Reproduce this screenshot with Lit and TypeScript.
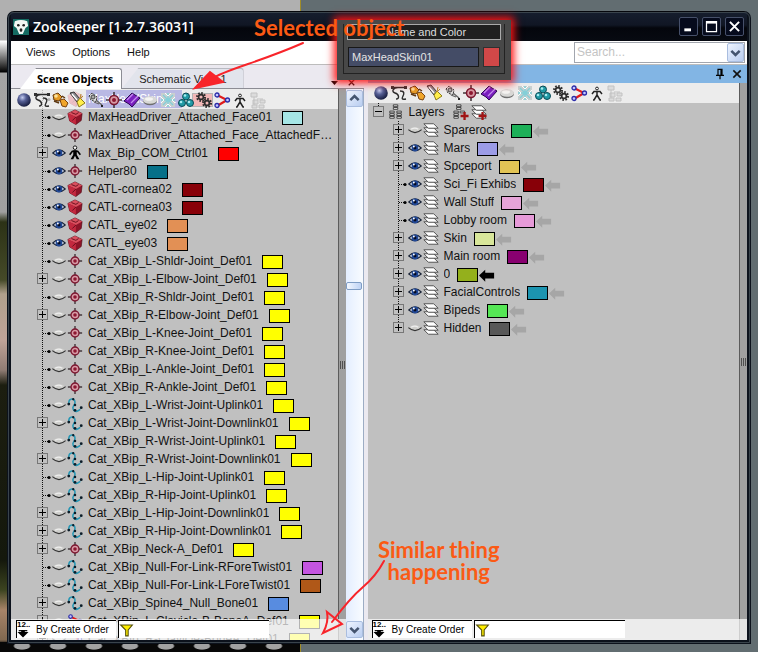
import { LitElement, html, css, svg, nothing } from "lit";
import { customElement, property } from "lit/decorators.js";
import { styleMap } from "lit/directives/style-map.js";

const glyphs: Record<string, unknown> = {
  sphere: svg`<defs><radialGradient id="s" cx=".38" cy=".32" r=".7"><stop offset="0" stop-color="#c4cdf0"/><stop offset=".4" stop-color="#566096"/><stop offset="1" stop-color="#141a3c"/></radialGradient></defs><circle cx="9" cy="9" r="6.8" fill="url(#s)"/>`,
  spline: svg`<path d="M2 3.500h13M9 3.500C3 3 1 8 5 9s5 6 1 6M10 7c5 0 4 3 3 5s-2 4 3 3" fill="none" stroke="#2a2a2a" stroke-width="1.400"/><path d="M1 2h3v3H1zM14 2h3v3h-3z" fill="#333"/>`,
  lights: svg`<path d="M2 4l5-2 4 4-3 4-5-1z" fill="#e39a25" stroke="#6a3b0c"/><path d="M9 9l4-1 4 4-2 4-4-1z" fill="#f0a52a" stroke="#7a420e"/><circle cx="5" cy="5" r="1.800" fill="#fbe29a"/><path d="M3 10l5 2M11 5l3 2" stroke="#5b3610" stroke-width="1.500"/>`,
  torch: svg`<path d="M1 2l4-1 6 7-3 3z" fill="#8c8c92" stroke="#333"/><path d="M3 3l5 6" stroke="#fff" stroke-width="1.300"/><path d="M11 7l5 5-6 4-2-5z" fill="#ffee4a" stroke="#8d7b1a"/><path d="M12 3l-1 5M14 5l-3 3" stroke="#b7882d"/>`,
  tape: svg`<path d="M2 5l3-3 5 4-1 5-5-2z" fill="#ddd" stroke="#333" stroke-dasharray="2 1"/><circle cx="6" cy="6" r="2" fill="#aaa" stroke="#444"/><path d="M9 9l6 5M7 11l5 2" stroke="#666" stroke-width="1.300"/><path d="M14 14h2v2h-2z" fill="#222"/>`,
  helper: svg`<path d="M9 1v16M1 9h16" stroke="#44383c" stroke-width="1.600"/><circle cx="9" cy="9" r="4.500" fill="#d79aa5" stroke="#7c1730" stroke-width="1.500"/><circle cx="9" cy="9" r="2" fill="#8c1731"/>`,
  warp: svg`<path d="M1 10l8-8 3 2 5 3-8 9-3-3z" fill="#7a1fc0" stroke="#2c0652"/><path d="M4 9l6-6M8 12l7-7" stroke="#c48af0" stroke-width="1.300"/>`,
  lid: svg`<ellipse cx="9" cy="10" rx="7" ry="4.200" fill="#6e6e6e"/><ellipse cx="9" cy="9" rx="7" ry="3.800" fill="#d8d8d6"/><ellipse cx="8" cy="8" rx="4" ry="1.800" fill="#f4f4f2"/>`,
  snow: svg`<path d="M2 2h14v14H2z" fill="#c9cfcf"/><path d="M9 2v14M2 9h14M4 4l10 10M14 4L4 14" stroke="#83cfd8" stroke-width="1.400"/><path d="M6 2l3 3 3-3M6 16l3-3 3 3M2 6l3 3-3 3M16 6l-3 3 3 3" fill="none" stroke="#f6ffff"/>`,
  balls: svg`<g fill="#219aa5" stroke="#0b4a55"><circle cx="9" cy="5.500" r="3.500"/><circle cx="5" cy="12" r="3.500"/><circle cx="13" cy="12" r="3.500"/></g><g fill="#a5ecf0"><circle cx="8" cy="4.500" r="1.300"/><circle cx="4" cy="11" r="1.300"/><circle cx="12" cy="11" r="1.300"/></g>`,
  gears: svg`<g fill="none" stroke="#2c2c2c"><circle cx="6" cy="6" r="4" stroke-width="2" stroke-dasharray="1.600 1.500"/><circle cx="6" cy="6" r="2.400" stroke-width="1.600"/><circle cx="12" cy="12" r="4" stroke-width="2" stroke-dasharray="1.600 1.500"/><circle cx="12" cy="12" r="2.400" stroke-width="1.800"/></g>`,
  bones: svg`<path d="M4 4l10 5-10 6" fill="none" stroke="#e01b1b" stroke-width="2.200"/><g fill="#c3c6ff" stroke="#2a2aa8" stroke-width="1.300"><circle cx="4" cy="4" r="2"/><circle cx="14.500" cy="9" r="2"/><circle cx="4" cy="14.500" r="2"/></g>`,
  biped: svg`<circle cx="9" cy="4.500" r="1.400" fill="#fff" stroke="#222"/><path d="M4 10l2-2.500h6l2 2.500M9 7v4M9 11l-3 5H5M9 11l3 5h1" fill="none" stroke="#222" stroke-width="1.500"/>`,
  walker: svg`<circle cx="9" cy="3" r="2" fill="#fff" stroke="#000"/><path d="M3 11l3-4h6l3 4" fill="none" stroke="#000" stroke-width="1.800"/><path d="M7 6h4v5l3 5h-3l-2-4-2 4H4l3-5z"/>`,
  tree: svg`<g fill="#dcdcdc" stroke="#c2c2c2"><path d="M2 2h6v4H2zM4 9h5v4H4zM11 9h5v3h-5zM3 14h5v3H3zM10 14h5v3h-5zM5 6v8M8 8h6"/></g>`,
  mesh: svg`<path d="M1 5l8-4 8 4-1 8-6 4.500-7-4z" fill="#8e1428" stroke="#4c0814" stroke-width=".7"/><path d="M1 5l8-4 8 4-7 4z" fill="#d9505f"/><path d="M1 5l9 4v8.500l-7-4z" fill="#c3293f"/><path d="M5 4l5 2 3-2M10 9l-4 4" fill="none" stroke="#5b0b18"/>`,
  cat: svg`<path d="M2 7c0-6 7-6 7-1s-4 4-2 8 5 2 8 0" fill="none" stroke="#2396b4" stroke-width="1.700"/><g fill="#0b1c28"><circle cx="2" cy="8" r="1.600"/><circle cx="7" cy="2.500" r="1.300"/><circle cx="9" cy="9" r="1.400"/><circle cx="9" cy="15" r="1.600"/><circle cx="16" cy="12" r="1.600"/></g>`,
  layers: svg`<g fill="#fff" stroke="#444"><path d="M1 11h11l5 5H6z"/><path d="M1 6.500h11l5 5H6z"/><path d="M1 2h11l5 5H6z"/></g>`,
  stack: svg`<g fill="#eee" stroke="#333"><path d="M6 1h5v2H6zM6 4h5v2H6zM2 8h5v2H2zM2 11h5v2H2zM2 14h5v2H2zM10 8h5v2h-5zM10 11h5v2h-5zM10 14h5v2h-5z"/></g>`,
  addStack: svg`<g fill="#eee" stroke="#333"><path d="M4 1h5v2H4zM4 4h5v2H4zM1 8h5v2H1zM1 11h5v2H1zM1 14h5v2H1zM8 8h5v2H8z"/></g><path d="M13 9v9M8.500 13.500h9" stroke="#a01414" stroke-width="2.600"/>`,
  addLayer: svg`<g fill="#fff" stroke="#444"><path d="M1 11h11l5 5H6z"/><path d="M1 6.500h11l5 5H6z"/><path d="M1 2h11l5 5H6z"/></g><path d="M13 9v9M8.500 13.500h9" stroke="#a01414" stroke-width="2.600"/>`,
  open: svg`<path d="M1 9Q9 1 17 9Q9 16 1 9z" fill="#f2f5fa" stroke="#1a2438" stroke-width="1.500"/><circle cx="9" cy="9" r="4.400" fill="#214896"/><circle cx="9" cy="9" r="1.900" fill="#040a20"/><circle cx="7.500" cy="7" r="1.200" fill="#fff"/>`,
  shut: svg`<path d="M1 8Q9 3 17 8Q9 15 1 8z" fill="#cfcfcc"/><path d="M0.500 8.500Q9 16 17.500 8.500" fill="none" stroke="#333" stroke-width="1.600"/><path d="M4 8Q9 5 13 8" fill="none" stroke="#eee" stroke-width="1.500"/>`,
  arrow: svg`<path d="M0 9.500L7 3v3.500h10v6.500H7v3.500z" fill="currentColor"/>`,
  funnel: svg`<path d="M2 3h14l-5 6v7H8V9z" fill="#ffee00" stroke="#55500a" stroke-width="1.300"/>`,
  down: svg`<path d="M4 7l5 5 5-5" fill="none" stroke="#44546f" stroke-width="3"/>`,
  up: svg`<path d="M4 11l5-5 5 5" fill="none" stroke="#44546f" stroke-width="3"/>`,
  close: svg`<path d="M3.500 3.500l11 11M14.500 3.500l-11 11" stroke="currentColor" stroke-width="2.400"/>`,
  maximise: svg`<path d="M3 3h12v12H3z" fill="none" stroke="#fff" stroke-width="1.500"/><path d="M3 4h12" stroke="#fff" stroke-width="3"/>`,
  minimise: svg`<path d="M4 13h8" stroke="#fff" stroke-width="3.500"/>`,
  pin: svg`<path d="M6 2h6v9H6zM10.500 2v9M3 11h12M9 11v6" fill="none" stroke="#000" stroke-width="1.800"/>`,
  caret: svg`<path d="M2 6h14l-7 8z"/>`,
  sort: svg`<path d="M6 5h6v3h6l-9 9-9-9h6z"/><path d="M2 6h14" stroke="#000" stroke-width="2"/>`,
  logo: svg`<path d="M0 0h18v18H0z" fill="#146b62"/><path d="M2 2.500Q9 0 16 2.500L17 8 14 10 11 17H7L4 10 1 8z" fill="#f3f8f4"/><g fill="#222"><circle cx="6" cy="7" r="1.500"/><circle cx="12" cy="7" r="1.500"/><ellipse cx="9" cy="12.500" rx="1.600" ry="2"/></g>`,
  blank: svg`<path d="M5 9l4-4 4 4v2H5z"/>`,
};

@customElement("zk-icon")
class ZkIcon extends LitElement {
  @property() name = "blank";
  static styles = css`
    :host { display: block; flex: none; width: 18px; height: 18px; }
    .glyph { display: block; width: 100%; height: 100%; }
  `;
  render() {
    return html`<svg class="glyph" viewBox="0 0 18 18" aria-hidden="true">${glyphs[this.name]}</svg>`;
  }
}

type Node = { label: string; icon: string; color: string; open?: boolean; parent?: boolean; selected?: boolean; current?: boolean };

const n = (label: string, icon: string, color: string, flags = ""): Node => ({
  label, icon, color,
  parent: flags.includes("+"),
  open: flags.includes("o"),
  selected: flags.includes("s"),
  current: flags.includes("c"),
});

const Y = "#ffff00";
const sceneNodes: Node[] = [
  n("MaxHeadSkin01", "mesh", "#d01010", "s"),
  n("MaxHeadDriver_Attached_Face01", "mesh", "#a6e6e6"),
  n("MaxHeadDriver_Attached_Face_AttachedFace02", "helper", ""),
  n("Max_Bip_COM_Ctrl01", "walker", "#ff0000", "+o"),
  n("Helper80", "helper", "#067088", "o"),
  n("CATL-cornea02", "mesh", "#880008", "o"),
  n("CATL-cornea03", "mesh", "#880008", "o"),
  n("CATL_eye02", "mesh", "#e29055", "o"),
  n("CATL_eye03", "mesh", "#e29055", "o"),
  n("Cat_XBip_L-Shldr-Joint_Def01", "helper", Y),
  n("Cat_XBip_L-Elbow-Joint_Def01", "helper", Y, "+"),
  n("Cat_XBip_R-Shldr-Joint_Def01", "helper", Y),
  n("Cat_XBip_R-Elbow-Joint_Def01", "helper", Y, "+"),
  n("Cat_XBip_L-Knee-Joint_Def01", "helper", Y),
  n("Cat_XBip_R-Knee-Joint_Def01", "helper", Y),
  n("Cat_XBip_L-Ankle-Joint_Def01", "helper", Y),
  n("Cat_XBip_R-Ankle-Joint_Def01", "helper", Y),
  n("Cat_XBip_L-Wrist-Joint-Uplink01", "cat", Y),
  n("Cat_XBip_L-Wrist-Joint-Downlink01", "cat", Y, "+"),
  n("Cat_XBip_R-Wrist-Joint-Uplink01", "cat", Y),
  n("Cat_XBip_R-Wrist-Joint-Downlink01", "cat", Y, "+"),
  n("Cat_XBip_L-Hip-Joint-Uplink01", "cat", Y),
  n("Cat_XBip_R-Hip-Joint-Uplink01", "cat", Y),
  n("Cat_XBip_L-Hip-Joint-Downlink01", "cat", Y, "+"),
  n("Cat_XBip_R-Hip-Joint-Downlink01", "cat", Y, "+"),
  n("Cat_XBip_Neck-A_Def01", "helper", Y, "+"),
  n("Cat_XBip_Null-For-Link-RForeTwist01", "cat", "#c455e0"),
  n("Cat_XBip_Null-For-Link-LForeTwist01", "cat", "#b05818"),
  n("Cat_XBip_Spine4_Null_Bone01", "cat", "#588ce0", "+"),
  n("Cat_XBip_L-Clavicle-B-BoneA_Def01", "bones", Y, "+"),
  n("Cat_XBip_R-Clavicle-BoneA_Def01", "bones", Y, "+"),
];

const layerNodes: Node[] = [
  n("Sparerocks", "layers", "#1cb058", "+"),
  n("Mars", "layers", "#9c9ce6", "+o"),
  n("Spceport", "layers", "#e2c455", "+o"),
  n("Sci_Fi Exhibs", "layers", "#880008", "o"),
  n("Wall Stuff", "layers", "#e6a4d8", "o"),
  n("Lobby room", "layers", "#e69ad8", "o"),
  n("Skin", "layers", "#d8e69a", "+o"),
  n("Main room", "layers", "#880070", "+o"),
  n("0", "layers", "#94b01c", "+oc"),
  n("FacialControls", "layers", "#1c94b0", "+o"),
  n("Bipeds", "layers", "#55e655", "+o"),
  n("Hidden", "layers", "#585858", "+"),
];

const tools: [string, string][] = [
  ["sphere", "Geometry"], ["spline", "Shapes"], ["lights", "Lights"], ["torch", "Cameras"], ["tape", "Tape"],
  ["helper", "Helpers"], ["warp", "Space warps"], ["lid", "Hidden"], ["snow", "Frozen"], ["balls", "Groups"],
  ["gears", "Systems"], ["bones", "Bones"], ["biped", "Bipeds"], ["tree", "Hierarchy"],
];

@customElement("app-root")
class AppRoot extends LitElement {
  static styles = css`
    :host {
      display: block; position: relative; box-sizing: border-box; height: 100vh; min-height: 400px;
      padding: 11px 7px 8px; overflow: hidden; background: #626d71; color: #111;
      font: 12px/18px "Liberation Sans", Arial, sans-serif;
    }
    * { box-sizing: border-box; }
    button, input { font: inherit; color: inherit; margin: 0; padding: 0; border: 0; background: none; min-width: 0; }
    button { display: block; flex: none; }

    .backdrop { position: absolute; inset: 0 auto 0 0; width: 301px; border-right: 1px solid #a08c28; display: flex; flex-direction: column;
      background: linear-gradient(#b0b0b0 40px, #fff 41px, #000 72px, #a4a4a4 73px, #a0a0a0 212px, #2c3216 222px, #454a28 280px, #b0a08c 294px, #c0a398 340px, #907c74 370px, #1c1e10 385px, #14180c 560px, #3c4420 590px, #a88468 610px, #806850 640px, #080808 644px); }
    .spots { margin-top: auto; height: 10px; background: #080808 radial-gradient(ellipse 9px 4px at 22px 4px, #a2a2a2 80%, transparent 100%) 0 0 / 36px 10px repeat-x; }

    .window { position: relative; height: 100%; display: flex; flex-direction: column; border: 4px solid #0c121c; border-top: 1px solid #05070c; border-radius: 7px 7px 0 0; background: #ebe9f0; outline: 1px solid #3a444c; outline-offset: -2px; }
    .title { flex: none; height: 29px; padding: 0 3px 0 2px; display: flex; align-items: center; gap: 4px; background: linear-gradient(#161e2e, #101624 45%, #04060c 55%, #070a12); }
    .title h1 { margin: 0 auto 0 0; font: 600 14px/20px "Open Sans", sans-serif; color: #fff; white-space: nowrap; }
    .logo { width: 16px; height: 16px; }
    .caption { width: 19px; height: 19px; padding: 1px; border: 1px solid #46506a; border-radius: 2px; color: #fff; background: #050a1c; }
    .caption zk-icon { width: 15px; height: 15px; }

    .menu { flex: none; height: 24px; display: flex; align-items: center; padding: 0 2px 1px 15px; gap: 17px; background: #fff; border-bottom: 1px solid #bcbcbc; font-size: 11px; }
    .search { margin-left: auto; width: 171px; height: 21px; display: flex; border: 1px solid #a2a6ae; background: #fff; font-size: 12px; }
    .search input { flex: 1; padding-left: 2px; }
    .search input::placeholder { color: #c4c4c4; opacity: 1; }
    .scroll-btn { width: 17px; height: 17px; border: 1px solid #a9bddf; border-radius: 2px; background: linear-gradient(135deg, #eef4ff, #b9cdf0); }
    .scroll-btn zk-icon { width: 15px; height: 15px; }
    .search .scroll-btn { height: 19px; padding-top: 1px; }

    .panes { flex: 1; min-height: 0; display: grid; grid-template-columns: minmax(0, 353fr) minmax(0, 380fr); grid-template-rows: minmax(0, 1fr); column-gap: 4px; }
    .pane { display: flex; flex-direction: column; min-height: 0; }
    .tabs { flex: none; height: 24px; display: flex; align-items: flex-end; padding: 0 8px 0 9px; border-bottom: 1px solid #8c8c94; font-size: 11px; }
    .tab { height: 20px; padding: 0 16px 0 17px; border: 1px solid #b8bac2; border-bottom: 0; border-left: 0; border-radius: 8px 3px 0 0; color: #222; background: #e2e4ec; clip-path: polygon(0 100%, 16px 0, 100% 0, 100% 100%); white-space: nowrap; }
    .tab.on { height: 21px; padding: 0 8px 0 17px; margin-bottom: -1px; background: #fff; border-color: #8c8c94; font: 700 11px/18px "Open Sans", sans-serif; color: #000; }
    .tab-tools { margin-left: auto; display: flex; gap: 8px; padding-bottom: 1px; }
    .tab-tools zk-icon { width: 9px; height: 9px; }
    .head { flex: none; height: 18px; display: flex; justify-content: flex-end; align-items: center; gap: 5px; padding-right: 4px; background: #82b5e4; }
    .head zk-icon { width: 12px; height: 12px; }

    .body { flex: 1; min-height: 0; display: flex; }
    .view { position: relative; flex: 1; min-width: 0; display: flex; background: #c0c0c0; }
    .main { position: relative; flex: 1; min-width: 0; overflow: hidden; }
    .tools { height: 20px; display: flex; padding: 1px 4px; background: rgba(255, 255, 255, 0.7); }
    .scene .tools { position: absolute; inset: 0 0 auto 0; padding-top: 2px; }
    .foot { position: absolute; inset: auto 0 0 0; height: 21px; display: flex; gap: 2px; padding: 1px 0 2px 5px; background: rgba(255, 255, 255, 0.7); }
    .layers .foot { padding-left: 4px; }
    .sorter { width: 100px; display: flex; align-items: center; border: 1px solid #000; border-width: 1px 0 0 1px; background: #fff; font-size: 10px; line-height: 16px; color: #000; }
    .sort-mark { width: 19px; display: flex; flex-direction: column; align-items: flex-start; font: 700 8px/5px "Liberation Sans", sans-serif; }
    .sort-mark zk-icon { width: 12px; height: 11px; }
    .filter { width: 151px; display: flex; align-items: center; border: 1px solid #000; border-width: 1px 0 0 1px; background: #fff; }
    .filter zk-icon { width: 15px; height: 16px; }
    .filter input { flex: 1; height: 16px; }
    .rail { flex: none; width: 8px; display: flex; align-items: center; padding-left: 1px; border-left: 1px solid #5c5c5c; background: #a0a0a0; }
    .grip { width: 6px; height: 8px; background: repeating-linear-gradient(90deg, #505050 0 1px, transparent 1px 2px); }
    .scroll { flex: none; width: 18px; display: flex; flex-direction: column; padding: 1px 0 2px; background: linear-gradient(90deg, #e4eeff, #f8fbff); border-right: 1px solid #9cacc4; }
    .track { flex: 1; display: grid; grid-template-rows: 175fr 8px 331fr; }
    .thumb { grid-row: 2; margin-right: 1px; border: 1px solid #7e9cc4; border-radius: 2px; background: linear-gradient(90deg, #f2f7ff, #bed2f4); }

    ul { list-style: none; margin: 0; padding: 1px 0 0 26px; }
    .layers ul { padding: 0 0 0 5px; }
    .layers ul ul { padding-left: 20px; }
    .row { height: 18px; display: flex; align-items: center; white-space: nowrap; }
    .twig { width: 15px; height: 18px; flex: none; }
    .twig svg { display: block; }
    .eye { width: 14px; height: 14px; }
    .eye zk-icon { width: 14px; height: 14px; }
    .kind { width: 16px; height: 16px; margin: 0 5px 0 1px; }
    .name { overflow: hidden; text-overflow: ellipsis; }
    .selected .name { margin-left: -2px; padding: 0 6px 0 2px; background: #1414a4; color: #fff; }
    .swatch { flex: none; width: 21px; height: 14px; margin: 2px 1px 0 10px; border: 1px solid #000; }
    .layers .swatch { margin-left: 7px; }
    .mark { width: 16px; height: 16px; margin-top: 1px; color: #a6a6a6; }
    .mark.current { color: #000; }
    .root .kind { margin: 0 5px 0 0; }
    .root .name { margin-right: 8px; }
    .root .add { width: 16px; height: 16px; margin-right: 2px; }
    .root .add zk-icon { width: 16px; height: 16px; }

    .card { position: absolute; left: 337px; top: 20px; width: 174px; height: 60px; padding: 4px 6px 6px; background: #484848; box-shadow: 0 0 8px 3px #ff1414; font-size: 11px; }
    .card fieldset { width: 100%; min-width: 0; height: 50px; margin: 0; padding: 0; border: 1px solid #222; border-top: 0; display: flex; flex-direction: column; gap: 7px; }
    .card h2 { margin: 0 3px; height: 16px; border: 1px solid #aaa; background: #202020; color: #ddd; font: 400 11px/14px "Liberation Sans", sans-serif; text-align: center; padding-left: 4px; }
    .fields { display: flex; gap: 4px; padding: 0 4px; }
    .fields input { flex: 1; width: 0; height: 20px; padding-left: 3px; border: 1px solid #181818; background: #444c66; color: #e4e4e4; }
    .fields button { width: 17px; height: 20px; border: 1px solid #303030; background: #d24848; }
    .note { position: absolute; margin: 0; font: 700 22px/22px Lato, sans-serif; color: #fb5a14; text-align: center; white-space: nowrap; pointer-events: none; }
    .note-a { left: 254px; top: 17px; }
    .note-b { left: 378px; top: 539px; }
    .ink { position: absolute; pointer-events: none; fill: none; stroke: #f8242a; stroke-width: 2; stroke-linecap: round; }
    .ink-a { left: 190px; top: 40px; }
    .ink-b { left: 320px; top: 558px; }
  `;

  twig(parent = false, last = false, open = false) {
    const art = svg`<path d="M5.500 0V${last ? 9 : 18}" stroke="#111" stroke-dasharray="1 1"/>
      ${parent
        ? svg`<rect x=".5" y="3.500" width="10" height="10" fill="#c0c0c0" stroke="#777"/><path d="M2 8.500h7${open ? "" : "M5.500 5v7"}" stroke="#000"/>`
        : svg`<path d="M6 9.500h7" stroke="#111" stroke-dasharray="1 1"/><circle cx="12" cy="9.500" r="1.600"/>`}`;
    const pic = html`<svg width="15" height="18" viewBox="0 0 15 18" aria-hidden="true">${art}</svg>`;
    return parent ? html`<button class="twig" aria-label="Expand">${pic}</button>` : html`<span class="twig">${pic}</span>`;
  }

  row(node: Node, last: boolean, layer: boolean) {
    return html`<li class="row ${node.selected ? "selected" : ""}">
      ${this.twig(node.parent, last)}
      <button class="eye" aria-label="Visibility of ${node.label}"><zk-icon name=${node.open ? "open" : "shut"}></zk-icon></button>
      <zk-icon class="kind" name=${node.icon}></zk-icon>
      <span class="name">${node.label}</span>
      ${node.color ? html`<button class="swatch" aria-label="Colour of ${node.label}" style=${styleMap({ background: node.color })}></button>` : nothing}
      ${layer ? html`<zk-icon class="mark ${node.current ? "current" : ""}" name="arrow"></zk-icon>` : nothing}
    </li>`;
  }

  toolbar() {
    return html`<div class="tools" role="toolbar">
      ${tools.map(([icon, label]) => html`<button aria-label=${label}><zk-icon name=${icon}></zk-icon></button>`)}
    </div>`;
  }

  footer() {
    return html`<div class="foot">
      <button class="sorter"><span class="sort-mark">12..<zk-icon name="sort"></zk-icon></span>By Create Order</button>
      <label class="filter"><zk-icon name="funnel"></zk-icon><input aria-label="Filter" /></label>
    </div>`;
  }

  render() {
    return html`
      <div class="backdrop"><div class="spots"></div></div>
      <div class="window">
        <header class="title">
          <zk-icon class="logo" name="logo"></zk-icon>
          <h1>Zookeeper [1.2.7.36031]</h1>
          ${["minimise", "maximise", "close"].map((c) => html`<button class="caption" aria-label=${c}><zk-icon name=${c}></zk-icon></button>`)}
        </header>
        <nav class="menu">
          <button>Views</button><button>Options</button><button>Help</button>
          <div class="search">
            <input aria-label="Search" placeholder="Search..." />
            <button class="scroll-btn" aria-label="Search history"><zk-icon name="down"></zk-icon></button>
          </div>
        </nav>
        <div class="panes">
          <section class="pane scene">
            <div class="tabs" role="tablist">
              <button class="tab on" role="tab" aria-selected="true">Scene Objects</button>
              <button class="tab" role="tab" aria-selected="false">Schematic View 1</button>
              <div class="tab-tools">
                <button aria-label="Tab list"><zk-icon name="caret"></zk-icon></button>
                <button aria-label="Close tab"><zk-icon name="close"></zk-icon></button>
              </div>
            </div>
            <div class="body">
              <div class="view">
                <div class="main">
                  <ul>${sceneNodes.map((x) => this.row(x, false, false))}</ul>
                  ${this.toolbar()}
                </div>
                <div class="rail"><span class="grip"></span></div>
                ${this.footer()}
              </div>
              <div class="scroll">
                <button class="scroll-btn" aria-label="Scroll up"><zk-icon name="up"></zk-icon></button>
                <div class="track"><div class="thumb"></div></div>
                <button class="scroll-btn" aria-label="Scroll down"><zk-icon name="down"></zk-icon></button>
              </div>
            </div>
          </section>
          <section class="pane layers">
            <div class="head">
              <button aria-label="Pin"><zk-icon name="pin"></zk-icon></button>
              <button aria-label="Close"><zk-icon name="close"></zk-icon></button>
            </div>
            <div class="body">
              <div class="view">
                <div class="main">
                  ${this.toolbar()}
                  <ul>
                    <li>
                      <div class="row root">
                        ${this.twig(true, true, true)}
                        <zk-icon class="kind" name="stack"></zk-icon>
                        <span class="name">Layers</span>
                        <button class="add" aria-label="Add hierarchy"><zk-icon name="addStack"></zk-icon></button>
                        <button class="add" aria-label="Add layer"><zk-icon name="addLayer"></zk-icon></button>
                      </div>
                      <ul>${layerNodes.map((x, i) => this.row(x, i === layerNodes.length - 1, true))}</ul>
                    </li>
                  </ul>
                </div>
                <div class="rail"><span class="grip"></span></div>
                ${this.footer()}
              </div>
            </div>
          </section>
        </div>
      </div>
      <div class="card">
        <fieldset aria-label="Name and Color">
          <h2>Name and Color</h2>
          <div class="fields">
            <input aria-label="Object name" .value=${"MaxHeadSkin01"} />
            <button aria-label="Object colour"></button>
          </div>
        </fieldset>
      </div>
      <svg class="ink ink-a" width="118" height="54" viewBox="0 0 118 54" aria-hidden="true">
        <path d="M113 3Q90 13 58 24T24 38"/><path d="M5 48L20 32L33 42Z" fill="#f8242a"/>
      </svg>
      <svg class="ink ink-b" width="68" height="80" viewBox="0 0 68 80" aria-hidden="true">
        <path d="M64 3Q56 18 43 29T12 64"/><path d="M7 54Q9 64 3 75L22 66Z"/>
      </svg>
      <p class="note note-a">Selected object</p>
      <p class="note note-b">Similar thing<br />happening</p>
    `;
  }
}
